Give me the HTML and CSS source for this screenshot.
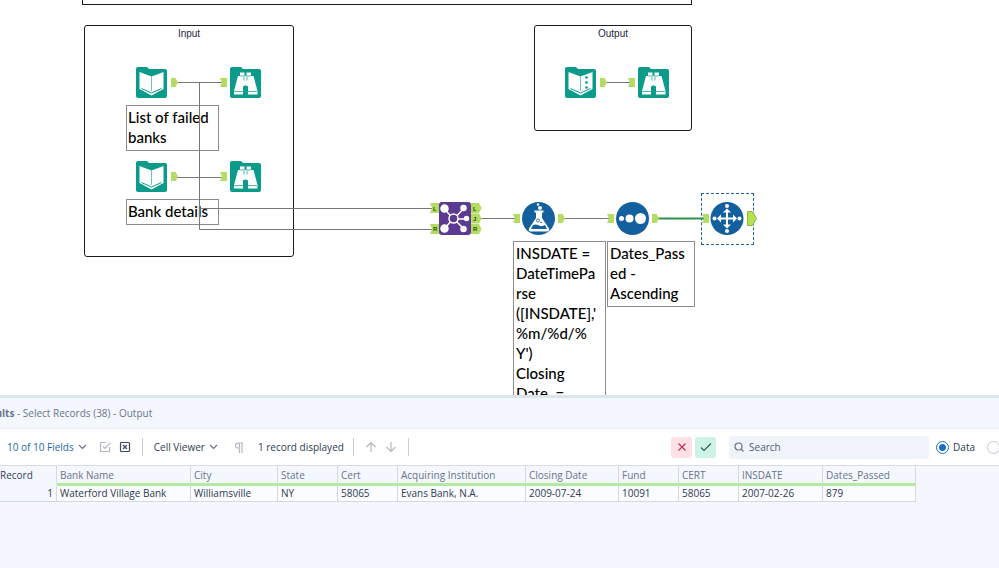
FILE: index.html
```html
<!DOCTYPE html>
<html lang="en">
<head>
<meta charset="utf-8">
<title>Workflow</title>
<link rel="stylesheet" href="styles.css">
</head>
<body>

<main class="canvas">
  <div class="container container-top"></div>
  <div class="container container-input">Input</div>
  <div class="container container-output">Output</div>

  <div class="note note-list">List of failed<br>banks</div>
  <div class="note note-details">Bank details</div>
  <div class="note note-formula">INSDATE =<br>DateTimePa<br>rse<br>([INSDATE],'<br>%m/%d/%<br>Y')<br>Closing<br>Date &nbsp;=</div>
  <div class="note note-sort">Dates_Pass<br>ed -<br>Ascending</div>
  <div class="selection"></div>

  <svg class="diagram" aria-hidden="true">
    <defs>
      <symbol id="tile" viewBox="0 0 31 31">
        <path d="M2 0h9l2 2h16q2 0 2 2v25q0 2-2 2H2q-2 0-2-2V2q0-2 2-2z" fill="#0a9b8b"/>
      </symbol>
      <symbol id="book" viewBox="0 0 31 31">
        <use href="#tile" width="31" height="31"/>
        <path d="M3.500 5L15.500 9.500 27.500 5V22L15.500 28.500 3.500 22z" fill="#fff"/>
        <path d="M15.500 9.500V24" fill="none" stroke="#0a9b8b" stroke-width=".6"/>
        <path d="M5.500 21.500l10 4.500 10-4.500" fill="none" stroke="#0a9b8b"/>
      </symbol>
      <symbol id="book-out" viewBox="0 0 31 31">
        <use href="#book" width="31" height="31"/>
        <g fill="#0a9b8b"><circle cx="21.500" cy="10.500" r="1.300"/><circle cx="21.500" cy="15.500" r="1.300"/><circle cx="21.500" cy="20.500" r="1.300"/></g>
      </symbol>
      <symbol id="browse" viewBox="0 0 31 31">
        <use href="#tile" width="31" height="31"/>
        <path d="M10 5.500h4.500v3.500h2V5.500H21v3.500h2.500l4 15v3.500H18v-8q-2.500-2-5 0v8H4v-3.500L8 9h2z" fill="#fff"/>
        <path d="M4 24.500h9M18 24.500h9M10 9h4.500M16.500 9h4.500M14 9.500v4M17 9.500v4" stroke="#0a9b8b" stroke-width=".7"/>
      </symbol>
      <symbol id="out" viewBox="0 0 7 9"><path d="M0 0h4.500L7 4.500 4.500 9H0z" fill="#b5dc62"/></symbol>
      <symbol id="in" viewBox="0 0 7 9"><path d="M0 0h7v9H0l2-4.500z" fill="#b5dc62"/></symbol>
    </defs>

    <!-- wires -->
    <g class="wire">
      <path d="M176 82.500H222M199.500 82.500V229.500H432"/>
      <path d="M176 177.500H222M199.500 177.500V208.500H432"/>
      <path d="M606 82.500H631M480 218.500H515M564 218.500H609"/>
    </g>
    <path class="wire-active" d="M658 218.500H705"/>

    <!-- input and output tools -->
    <use href="#book" x="136" y="67" width="31" height="31"/>
    <use href="#browse" x="230" y="67" width="31" height="31"/>
    <use href="#book" x="136" y="161" width="31" height="31"/>
    <use href="#browse" x="230" y="161" width="31" height="31"/>
    <use href="#book-out" x="565" y="67" width="31" height="31"/>
    <use href="#browse" x="638" y="67" width="31" height="31"/>

    <!-- anchors -->
    <use href="#out" x="171" y="78" width="7" height="9"/>
    <use href="#in" x="220" y="78" width="7" height="9"/>
    <use href="#out" x="171" y="172" width="7" height="9"/>
    <use href="#in" x="220" y="172" width="7" height="9"/>
    <use href="#out" x="600" y="78" width="7" height="9"/>
    <use href="#in" x="628" y="78" width="7" height="9"/>
    <use href="#in" x="513" y="214" width="7" height="9"/>
    <use href="#out" x="558" y="214" width="7" height="9"/>
    <use href="#in" x="607" y="214" width="7" height="9"/>
    <use href="#out" x="652" y="214" width="7" height="9"/>
    <use href="#in" x="702" y="214" width="7" height="9"/>
    <path d="M747.500 211.500h5l4 7-4 7h-5z" fill="#b5e04f" stroke="#8fbc45"/>

    <!-- join -->
    <g fill="#b5dc62">
      <path d="M430 203h9v10h-9l2-5zM430 224h9v10h-9l2-5z"/>
      <path d="M471 203h8l2.500 5-2.500 5h-8zM471 213.500h8l2.500 5-2.500 5h-8zM471 224h8l2.500 5-2.500 5h-8z"/>
    </g>
    <g class="anchor-text">
      <text x="433" y="211">L</text><text x="433" y="231">R</text>
      <text x="473" y="211">L</text><text x="473" y="221">J</text><text x="473" y="231">R</text>
    </g>
    <rect x="439" y="202" width="32" height="33" rx="3" fill="#5c3a92"/>
    <g stroke="#fff" stroke-width="1.500" fill="#fff">
      <path d="M444 208l9 11-9 10M454 219l10-11M454 219h12M454 219l10 10" fill="none"/>
      <circle cx="444.500" cy="208.500" r="3.500"/><circle cx="444.500" cy="228.500" r="3.500"/>
      <circle cx="463.500" cy="208" r="2.500"/><circle cx="466.500" cy="218.500" r="2"/><circle cx="463.500" cy="229" r="2.500"/>
      <circle cx="453.500" cy="218.500" r="4.500" fill="#5c3a92"/>
    </g>

    <!-- formula -->
    <circle cx="538.500" cy="218.500" r="16.500" fill="#14609f"/>
    <path d="M534.500 210.500h9v2h-1.500v5.500l7 10.500q1 3-2 3h-16q-3 0-2-3l7-10.500v-5.500h-1.500z" fill="#fff"/>
    <path d="M533 225q3-1 6 .500t6-.500l2 4h-16z" fill="#14609f"/>
    <circle cx="538" cy="220.500" r="1.500" fill="none" stroke="#14609f" stroke-width=".8"/><circle cx="541" cy="222.500" r=".8" fill="#14609f"/>
    <circle cx="540" cy="208" r="2" fill="#fff"/><circle cx="538" cy="204.500" r="1.200" fill="#fff"/>

    <!-- sort -->
    <circle cx="632.500" cy="218.500" r="16.500" fill="#14609f"/>
    <g fill="#fff"><circle cx="621.500" cy="218.500" r="2.500"/><circle cx="629.500" cy="218.500" r="4"/><circle cx="640.500" cy="218.500" r="5.500"/></g>

    <!-- select records -->
    <circle cx="727" cy="218.500" r="16.500" fill="#14609f"/>
    <g fill="#fff">
      <path d="M727 208.500l4 4h-3v5h5v-3l4 4-4 4v-3h-5v5h3l-4 4-4-4h3v-5h-5v3l-4-4 4-4v3h5v-5h-3z"/>
      <circle cx="727" cy="206" r="2"/><circle cx="727" cy="231" r="2"/><circle cx="714.500" cy="218.500" r="2"/><circle cx="739.500" cy="218.500" r="2"/>
    </g>
  </svg>
</main>

<section class="results">
  <header class="results-title"><b>Results</b> - Select Records (38) - Output</header>

  <div class="toolbar">
    <button class="link">10 of 10 Fields
      <svg width="9" height="6" viewBox="0 0 9 6"><path d="M1 1l3.500 3.500L8 1"/></svg>
    </button>
    <button class="check-all" aria-label="Select all">
      <svg class="pale" width="12" height="12" viewBox="0 0 12 12"><path d="M7 1.500H1.500v9h9V6M4 5.500l2 2L11 2"/></svg>
    </button>
    <button class="clear-all" aria-label="Deselect all">
      <svg class="dark" width="12" height="12" viewBox="0 0 12 12"><rect x="1.500" y="1.500" width="9" height="9" rx="1"/><path d="M4 4l4 4M8 4L4 8"/></svg>
    </button>
    <span class="divider"></span>
    <button class="viewer">Cell Viewer
      <svg width="9" height="6" viewBox="0 0 9 6"><path d="M1 1l3.500 3.500L8 1"/></svg>
    </button>
    <button class="marks" aria-label="Show whitespace">
      <svg class="pale" width="10" height="11" viewBox="0 0 10 11"><path d="M9 1H4a2.500 2.500 0 0 0 0 5h1M5.500 1v10M8 1v10"/></svg>
    </button>
    <span class="count">1 record displayed</span>
    <span class="divider"></span>
    <button class="up" aria-label="Previous">
      <svg class="pale" width="12" height="12" viewBox="0 0 12 12"><path d="M6 11V1.500M1.500 6L6 1.500 10.500 6"/></svg>
    </button>
    <button class="down" aria-label="Next">
      <svg class="pale" width="12" height="12" viewBox="0 0 12 12"><path d="M6 1v9.500M1.500 6L6 10.500 10.500 6"/></svg>
    </button>
    <span class="divider"></span>

    <div class="right">
      <button class="square cancel" aria-label="Cancel"><svg width="10" height="10" viewBox="0 0 10 10"><path d="M1.500 1.500l7 7M8.500 1.500l-7 7"/></svg></button>
      <button class="square apply" aria-label="Apply"><svg width="12" height="10" viewBox="0 0 12 10"><path d="M1 5.500L4 8.500 11 1.500"/></svg></button>
      <label class="search">
        <svg width="10" height="10" viewBox="0 0 10 10"><circle cx="4.500" cy="4.500" r="3.500"/><path d="M7 7l2.500 2.500"/></svg>
        <input type="text" placeholder="Search" aria-label="Search">
      </label>
      <label class="radio"><input type="radio" name="view" checked>Data</label>
      <input type="radio" name="view" aria-label="Metadata">
    </div>
  </div>

  <table>
    <colgroup>
      <col class="w-record"><col class="w-bank"><col class="w-city"><col class="w-small"><col class="w-small"><col class="w-acquirer">
      <col class="w-closing"><col class="w-small"><col class="w-small"><col class="w-insdate"><col class="w-passed">
    </colgroup>
    <thead>
      <tr><th class="record">Record</th><th>Bank Name</th><th>City</th><th>State</th><th>Cert</th><th>Acquiring Institution</th><th>Closing Date</th><th>Fund</th><th>CERT</th><th>INSDATE</th><th>Dates_Passed</th></tr>
    </thead>
    <tbody>
      <tr><td class="record">1</td><td>Waterford Village Bank</td><td>Williamsville</td><td>NY</td><td>58065</td><td>Evans Bank, N.A.</td><td>2009-07-24</td><td>10091</td><td>58065</td><td>2007-02-26</td><td>879</td></tr>
    </tbody>
  </table>
</section>

</body>
</html>
```

FILE: styles.css
```css
* {
  box-sizing: border-box;
}

body {
  margin: 0;
  height: 100vh;
  display: flex;
  flex-direction: column;
  overflow: hidden;
  font-family: "Open Sans", "Noto Sans", sans-serif;
  font-size: 10px;
  color: #2c3a50;
  background: #fff;
}

/* workflow canvas */
.canvas {
  position: relative;
  flex: 1;
  overflow: hidden;
}

.container {
  position: absolute;
  border: 1px solid #1c1c1c;
  border-radius: 3px;
  padding-top: 1px;
  font: 10px/14px "Liberation Sans", Arial, sans-serif;
  text-align: center;
  color: #26263c;
}

.container-top {
  left: 82px;
  top: -20px;
  width: 610px;
  height: 25px;
  border-radius: 0;
}

.container-input {
  left: 84px;
  top: 25px;
  width: 210px;
  height: 232px;
}

.container-output {
  left: 534px;
  top: 25px;
  width: 158px;
  height: 106px;
}

.note {
  position: absolute;
  width: 93px;
  padding: 1px 1px 3px;
  border: 1px solid #8c8c8c;
  font: 500 15px/20px Lato, sans-serif;
  color: #000;
  background: #fff;
  white-space: nowrap;
}

.note-list {
  left: 126px;
  top: 105px;
}

.note-details {
  left: 126px;
  top: 199px;
}

.note-formula {
  left: 513px;
  top: 241px;
  padding-left: 2px;
}

.note-sort {
  left: 607px;
  top: 241px;
  width: 88px;
  padding-left: 2px;
}

.selection {
  position: absolute;
  left: 701px;
  top: 193px;
  width: 53px;
  height: 52px;
  border: 1px dashed #1a62a0;
}

.diagram {
  position: absolute;
  left: 0;
  top: 0;
  width: 100%;
  height: 100%;
}

.wire {
  fill: none;
  stroke: #777;
}

.wire-active {
  stroke: #2f9150;
  stroke-width: 2;
}

.anchor-text {
  font: bold 6px "Liberation Sans", Arial, sans-serif;
  fill: #2d4a16;
}

/* results window, runs past both sides of the view */
.results {
  margin-left: -24px;
  border-top: 3px solid #dce4ec;
  padding-bottom: 66px;
  background: #f4f7fd;
}

.results-title {
  height: 30px;
  line-height: 30px;
  padding-left: 2px;
  color: #67758c;
}

.toolbar {
  display: flex;
  align-items: center;
  height: 38px;
  padding-left: 31px;
  border-top: 1px solid #e8ecf3;
  border-bottom: 1px solid #d6dce6;
  background: #fff;
}

button {
  display: flex;
  align-items: center;
  gap: 4px;
  padding: 0;
  border: 0;
  background: none;
  font: inherit;
  color: inherit;
  white-space: nowrap;
}

svg {
  flex: none;
}

.toolbar svg {
  fill: none;
  stroke: #6a7485;
  stroke-width: 1.2;
}

.toolbar .pale {
  stroke: #b3b8c0;
}

.toolbar .dark {
  stroke: #3c4c66;
}

.link {
  color: #2467a8;
}

.check-all {
  margin-left: 12px;
}

.clear-all {
  margin-left: 8px;
}

.divider {
  width: 1px;
  height: 18px;
  margin: 0 11px;
  background: #c9cdd5;
}

.marks {
  margin-left: 16px;
}

.count {
  margin-left: 14px;
  white-space: nowrap;
}

.count + .divider {
  margin-left: 9px;
}

.down {
  margin-left: 8px;
}

.right {
  flex: 1;
  display: flex;
  align-items: center;
  justify-content: flex-end;
  margin-right: -1px;
}

.square {
  width: 21px;
  height: 21px;
  justify-content: center;
  border-radius: 3px;
}

.cancel {
  margin-right: 3px;
  background: #fde1e6;
}

.toolbar .cancel svg {
  stroke: #c0304c;
}

.apply {
  margin-right: 13px;
  background: #cdf3e6;
}

.toolbar .apply svg {
  stroke: #2a6659;
}

.search {
  display: flex;
  align-items: center;
  gap: 5px;
  width: 200px;
  height: 23px;
  padding: 0 5px;
  border-radius: 3px;
  background: #f0f3f9;
}

.search input {
  flex: 1;
  min-width: 0;
  padding: 0;
  border: 0;
  outline: 0;
  background: none;
  font: inherit;
}

.search input::placeholder {
  color: #4f5d74;
}

.radio {
  display: flex;
  align-items: center;
  gap: 4px;
  margin: 0 12px 0 7px;
}

input[type="radio"] {
  appearance: none;
  flex: none;
  width: 13px;
  height: 13px;
  margin: 0;
  border: 1px solid #c3c7ce;
  border-radius: 50%;
  background: #fff;
}

input[type="radio"]:checked {
  border-color: #1b6fc0;
  background: radial-gradient(#1b6fc0 3px, #fff 4px);
}

/* results grid */
table {
  width: 940px;
  table-layout: fixed;
  border-collapse: separate;
  border-spacing: 0;
}

th,
td {
  padding: 0 3px;
  border-right: 1px solid #d3d9e3;
  text-align: left;
  white-space: nowrap;
}

th {
  height: 20px;
  border-bottom: 3px solid #b2ea9f;
  font-weight: normal;
  color: #68758a;
}

td {
  height: 16px;
  border-bottom: 1px solid #d3d9e3;
  line-height: 15px;
  background: #fbfcff;
}

th.record {
  padding-left: 24px;
  border-bottom-color: #f4f7fd;
  color: #36435a;
}

td.record {
  text-align: right;
  background: #f4f7fd;
}

.w-record { width: 81px; }
.w-bank { width: 134px; }
.w-city { width: 87px; }
.w-small { width: 60px; }
.w-acquirer { width: 128px; }
.w-closing { width: 93px; }
.w-insdate { width: 84px; }
.w-passed { width: 93px; }
```
